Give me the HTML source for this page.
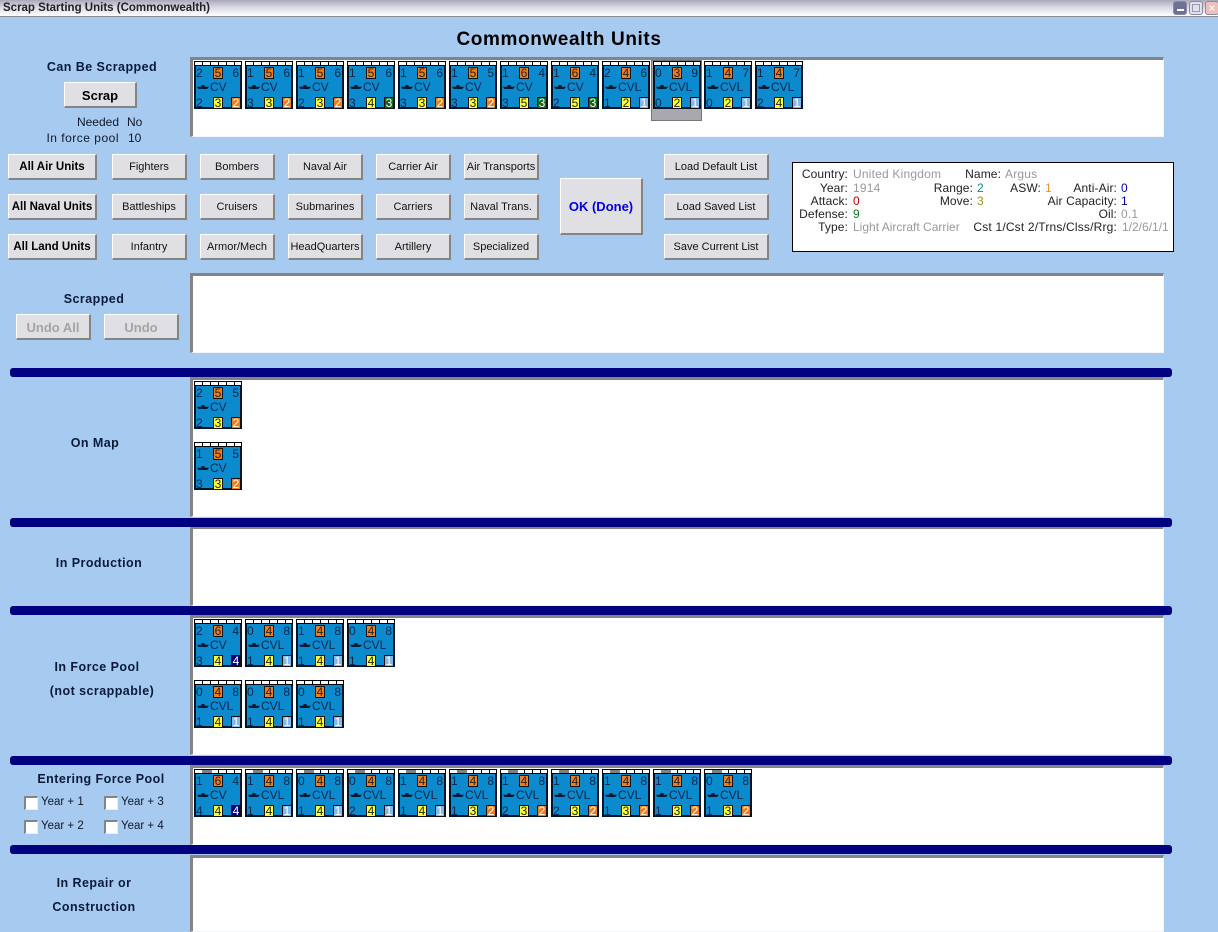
<!DOCTYPE html>
<html><head><meta charset="utf-8"><style>
html,body{margin:0;padding:0;width:1218px;height:932px;overflow:hidden;background:#a6caf0;font-family:"Liberation Sans",sans-serif;font-size:12px;color:#101828}
div,span,a{position:absolute;white-space:nowrap}
#w{left:0;top:0;width:1218px;height:932px;overflow:hidden}
#tb{left:0;top:0;width:1218px;height:16px;background:linear-gradient(#a9a9bb,#d8d8e2 45%,#fff);border-bottom:1px solid #8a8a98;font-weight:bold;font-size:11.5px;line-height:16px;color:#222}
.wb{top:1px;width:12px;height:12px;border:1px solid #8a8aa0;border-radius:3px;background:#dfe2ee;overflow:hidden}
.p{left:190px;width:970px;background:#fff;border-top:3px solid #848484;border-left:3px solid #848484;border-right:1px solid #f2f4fa;border-bottom:1px solid #f2f4fa}
.bar{left:10px;width:1162px;height:9px;background:#000080;border-radius:3px}
.b{height:23px;background:#e0dfe3;border-top:1px solid #fff;border-left:1px solid #fff;border-right:2px solid #848484;border-bottom:2px solid #848484;text-align:center;line-height:25px;font-size:11px;color:#111;box-sizing:content-box}
.h{font-weight:bold;color:#000;font-size:11.5px}
.g{color:#a4a4a4;font-weight:bold;font-size:13px}
.t{transform:translateX(-50%);font-weight:bold;font-size:12.5px;letter-spacing:.45px;color:#0a1a38;line-height:14px}
.r{text-align:right;width:100px;line-height:14px}
.cb{width:11px;height:11px;background:#fff;border-top:2px solid #848484;border-left:2px solid #848484;border-right:1px solid #e8eef8;border-bottom:1px solid #e8eef8}
.cl{line-height:14px;font-size:11.5px}
#info{left:792px;top:162px;width:380px;height:88px;background:#fff;border:1px solid #000}
#info span{line-height:13px;font-size:12px;color:#222;letter-spacing:.1px}
#info .v{color:#999;letter-spacing:.2px}
.u{width:48px;height:48px;background:#0b8ace;box-shadow:inset 0 -2px 0 #021428,inset 2px 0 0 #021428,inset -2px 0 0 #021428}
.s{left:0;top:0;width:48px;height:5px;box-sizing:border-box;border:1px solid #000;border-bottom:1px solid #000;background:repeating-linear-gradient(90deg,#fff 0 7px,#000 7px 8px)}
.s span{left:7px;top:0;width:10px;height:3px;background:#808080}
.a,.c,.d{line-height:12px;font-size:12px;color:#06284e}
.a{left:2px;top:6px}.c{right:3px;top:6px}.d{left:2px;top:36px}
.k{left:19px;top:6px;width:8px;height:10px;border:1px solid #111;text-align:center;line-height:11px;font-size:12px;color:#222;background:#ef7d18}
.y{top:36px;height:10px;background:#ffff33}
.q{left:37px;top:36px;height:10px;color:#fff}
.o{background:#ef7d18}.e{background:#0a6a18}.l{background:#80b8f0}.n{background:#000080}
.m{left:3px;top:24px;width:12px;height:4px;background:#031a30;clip-path:polygon(0 45%,35% 45%,38% 0,62% 0,65% 45%,100% 45%,85% 100%,12% 100%)}
.w{left:16px;top:20px;line-height:13px;font-size:12px;color:#06284e}
</style></head><body><div id="w">
<div id="tb"><span style="left:3px;top:0">Scrap Starting Units (Commonwealth)</span></div>
<div class="wb" style="left:1173px;background:#6d7198"><span style="left:3px;top:7px;width:7px;height:2px;background:#fff"></span></div>
<div class="wb" style="left:1189px"><span style="left:2px;top:2px;width:6px;height:6px;border:1px solid #99a"></span></div>
<div class="wb" style="left:1205px;background:#eec0bc;color:#fff;font-size:12px;line-height:12px;text-align:center">×</div>

<div style="left:0;width:1118px;top:29px;text-align:center;font-weight:bold;font-size:19px;line-height:22px;color:#000;letter-spacing:.6px">Commonwealth Units</div>

<div class="t" style="left:102px;top:60px">Can Be Scrapped</div>
<div class="b h" style="left:64px;top:82px;width:70px;font-size:13px">Scrap</div>
<div class="r" style="left:19px;top:115px">Needed</div><div style="left:127px;top:115px;line-height:14px">No</div>
<div class="r" style="left:19px;top:131px;letter-spacing:.5px">In force pool</div><div style="left:128px;top:131px;line-height:14px">10</div>

<div class="p" style="top:57px;height:76px"></div>
<div class="p" style="top:273px;height:76px"></div>
<div class="p" style="top:377px;height:136px"></div>
<div class="p" style="top:526px;height:76px"></div>
<div class="p" style="top:615px;height:136px"></div>
<div class="p" style="top:765px;height:76px"></div>
<div class="p" style="top:855px;height:73px"></div>

<div style="left:651px;top:60px;width:51px;height:61px;background:#a8a8b0;border:1px solid #777;box-sizing:border-box"></div>

<div class="b h" style="left:8px;top:154px;width:86px">All Air Units</div>
<div class="b h" style="left:8px;top:194px;width:86px">All Naval Units</div>
<div class="b h" style="left:8px;top:234px;width:86px">All Land Units</div>
<div class="b" style="left:112px;top:154px;width:72px">Fighters</div>
<div class="b" style="left:200px;top:154px;width:72px">Bombers</div>
<div class="b" style="left:288px;top:154px;width:72px">Naval Air</div>
<div class="b" style="left:376px;top:154px;width:72px">Carrier Air</div>
<div class="b" style="left:464px;top:154px;width:72px">Air Transports</div>
<div class="b" style="left:112px;top:194px;width:72px">Battleships</div>
<div class="b" style="left:200px;top:194px;width:72px">Cruisers</div>
<div class="b" style="left:288px;top:194px;width:72px">Submarines</div>
<div class="b" style="left:376px;top:194px;width:72px">Carriers</div>
<div class="b" style="left:464px;top:194px;width:72px">Naval Trans.</div>
<div class="b" style="left:112px;top:234px;width:72px">Infantry</div>
<div class="b" style="left:200px;top:234px;width:72px">Armor/Mech</div>
<div class="b" style="left:288px;top:234px;width:72px">HeadQuarters</div>
<div class="b" style="left:376px;top:234px;width:72px">Artillery</div>
<div class="b" style="left:464px;top:234px;width:72px">Specialized</div>
<div class="b" style="left:560px;top:178px;width:80px;height:54px;line-height:56px;font-weight:bold;font-size:13px;color:#0000e0">OK (Done)</div>
<div class="b" style="left:664px;top:154px;width:102px">Load Default List</div>
<div class="b" style="left:664px;top:194px;width:102px">Load Saved List</div>
<div class="b" style="left:664px;top:234px;width:102px">Save Current List</div>

<div id="info">
<span style="right:325px;top:5px">Country:</span><span class="v" style="left:60px;top:5px">United Kingdom</span>
<span style="right:172px;top:5px">Name:</span><span class="v" style="left:212px;top:5px">Argus</span>
<span style="right:325px;top:19px">Year:</span><span class="v" style="left:60px;top:19px">1914</span>
<span style="right:200px;top:19px">Range:</span><span style="left:184px;top:19px;color:#0a8a8a">2</span>
<span style="right:132px;top:19px">ASW:</span><span style="left:252px;top:19px;color:#e89030">1</span>
<span style="right:56px;top:19px">Anti-Air:</span><span style="left:328px;top:19px;color:#0000c0">0</span>
<span style="right:325px;top:32px">Attack:</span><span style="left:60px;top:32px;color:#c00000">0</span>
<span style="right:200px;top:32px">Move:</span><span style="left:184px;top:32px;color:#a09020">3</span>
<span style="right:56px;top:32px">Air Capacity:</span><span style="left:328px;top:32px;color:#000080">1</span>
<span style="right:325px;top:45px">Defense:</span><span style="left:60px;top:45px;color:#0a7a20">9</span>
<span style="right:56px;top:45px">Oil:</span><span class="v" style="left:328px;top:45px">0.1</span>
<span style="right:325px;top:58px">Type:</span><span class="v" style="left:60px;top:58px;letter-spacing:0">Light Aircraft Carrier</span>
<span style="right:56px;top:58px;letter-spacing:.18px">Cst 1/Cst 2/Trns/Clss/Rrg:</span><span class="v" style="left:329px;top:58px;letter-spacing:0">1/2/6/1/1</span>
</div>

<div class="t" style="left:94px;top:292px">Scrapped</div>
<div class="b g" style="left:16px;top:314px;width:72px">Undo All</div>
<div class="b g" style="left:104px;top:314px;width:72px">Undo</div>
<div class="t" style="left:95px;top:436px">On Map</div>
<div class="t" style="left:99px;top:556px">In Production</div>
<div class="t" style="left:97px;top:660px">In Force Pool</div>
<div class="t" style="left:102px;top:684px">(not scrappable)</div>
<div class="t" style="left:101px;top:772px">Entering Force Pool</div>
<div class="t" style="left:94px;top:876px">In Repair or</div>
<div class="t" style="left:94px;top:900px">Construction</div>

<div class="cb" style="left:24px;top:796px"></div><div class="cl" style="left:41px;top:795px">Year + 1</div>
<div class="cb" style="left:104px;top:796px"></div><div class="cl" style="left:121px;top:795px">Year + 3</div>
<div class="cb" style="left:24px;top:820px"></div><div class="cl" style="left:41px;top:819px">Year + 2</div>
<div class="cb" style="left:104px;top:820px"></div><div class="cl" style="left:121px;top:819px">Year + 4</div>

<div class="bar" style="top:368px"></div>
<div class="bar" style="top:518px"></div>
<div class="bar" style="top:606px"></div>
<div class="bar" style="top:756px"></div>
<div class="bar" style="top:845px"></div>

<!-- top row -->
<div class="u" style="left:194px;top:61px"><div class="s"></div><span class="a">2</span><span class="k">5</span><span class="c">6</span><span class="m"></span><span class="w">CV</span><span class="d">2</span><span class="k y">3</span><span class="k q o">2</span></div>
<div class="u" style="left:245px;top:61px"><div class="s"></div><span class="a">1</span><span class="k">5</span><span class="c">6</span><span class="m"></span><span class="w">CV</span><span class="d">3</span><span class="k y">3</span><span class="k q o">2</span></div>
<div class="u" style="left:296px;top:61px"><div class="s"></div><span class="a">1</span><span class="k">5</span><span class="c">6</span><span class="m"></span><span class="w">CV</span><span class="d">2</span><span class="k y">3</span><span class="k q o">2</span></div>
<div class="u" style="left:347px;top:61px"><div class="s"></div><span class="a">1</span><span class="k">5</span><span class="c">6</span><span class="m"></span><span class="w">CV</span><span class="d">3</span><span class="k y">4</span><span class="k q e">3</span></div>
<div class="u" style="left:398px;top:61px"><div class="s"></div><span class="a">1</span><span class="k">5</span><span class="c">6</span><span class="m"></span><span class="w">CV</span><span class="d">3</span><span class="k y">3</span><span class="k q o">2</span></div>
<div class="u" style="left:449px;top:61px"><div class="s"></div><span class="a">1</span><span class="k">5</span><span class="c">5</span><span class="m"></span><span class="w">CV</span><span class="d">3</span><span class="k y">3</span><span class="k q o">2</span></div>
<div class="u" style="left:500px;top:61px"><div class="s"></div><span class="a">1</span><span class="k">6</span><span class="c">4</span><span class="m"></span><span class="w">CV</span><span class="d">3</span><span class="k y">5</span><span class="k q e">3</span></div>
<div class="u" style="left:551px;top:61px"><div class="s"></div><span class="a">1</span><span class="k">6</span><span class="c">4</span><span class="m"></span><span class="w">CV</span><span class="d">2</span><span class="k y">5</span><span class="k q e">3</span></div>
<div class="u" style="left:602px;top:61px"><div class="s"></div><span class="a">2</span><span class="k">4</span><span class="c">6</span><span class="m"></span><span class="w">CVL</span><span class="d">1</span><span class="k y">2</span><span class="k q l">1</span></div>
<div class="u" style="left:653px;top:61px"><div class="s"></div><span class="a">0</span><span class="k">3</span><span class="c">9</span><span class="m"></span><span class="w">CVL</span><span class="d">0</span><span class="k y">2</span><span class="k q l">1</span></div>
<div class="u" style="left:704px;top:61px"><div class="s"></div><span class="a">1</span><span class="k">4</span><span class="c">7</span><span class="m"></span><span class="w">CVL</span><span class="d">0</span><span class="k y">2</span><span class="k q l">1</span></div>
<div class="u" style="left:755px;top:61px"><div class="s"></div><span class="a">1</span><span class="k">4</span><span class="c">7</span><span class="m"></span><span class="w">CVL</span><span class="d">2</span><span class="k y">4</span><span class="k q l">1</span></div>

<!-- on map -->
<div class="u" style="left:194px;top:381px"><div class="s"></div><span class="a">2</span><span class="k">5</span><span class="c">5</span><span class="m"></span><span class="w">CV</span><span class="d">2</span><span class="k y">3</span><span class="k q o">2</span></div>
<div class="u" style="left:194px;top:442px"><div class="s"></div><span class="a">1</span><span class="k">5</span><span class="c">5</span><span class="m"></span><span class="w">CV</span><span class="d">3</span><span class="k y">3</span><span class="k q o">2</span></div>

<!-- force pool -->
<div class="u" style="left:194px;top:619px"><div class="s"></div><span class="a">2</span><span class="k">6</span><span class="c">4</span><span class="m"></span><span class="w">CV</span><span class="d">3</span><span class="k y">4</span><span class="k q n">4</span></div>
<div class="u" style="left:245px;top:619px"><div class="s"></div><span class="a">0</span><span class="k">4</span><span class="c">8</span><span class="m"></span><span class="w">CVL</span><span class="d">1</span><span class="k y">4</span><span class="k q l">1</span></div>
<div class="u" style="left:296px;top:619px"><div class="s"></div><span class="a">1</span><span class="k">4</span><span class="c">8</span><span class="m"></span><span class="w">CVL</span><span class="d">1</span><span class="k y">4</span><span class="k q l">1</span></div>
<div class="u" style="left:347px;top:619px"><div class="s"></div><span class="a">0</span><span class="k">4</span><span class="c">8</span><span class="m"></span><span class="w">CVL</span><span class="d">1</span><span class="k y">4</span><span class="k q l">1</span></div>
<div class="u" style="left:194px;top:680px"><div class="s"></div><span class="a">0</span><span class="k">4</span><span class="c">8</span><span class="m"></span><span class="w">CVL</span><span class="d">1</span><span class="k y">4</span><span class="k q l">1</span></div>
<div class="u" style="left:245px;top:680px"><div class="s"></div><span class="a">0</span><span class="k">4</span><span class="c">8</span><span class="m"></span><span class="w">CVL</span><span class="d">1</span><span class="k y">4</span><span class="k q l">1</span></div>
<div class="u" style="left:296px;top:680px"><div class="s"></div><span class="a">0</span><span class="k">4</span><span class="c">8</span><span class="m"></span><span class="w">CVL</span><span class="d">1</span><span class="k y">4</span><span class="k q l">1</span></div>

<!-- entering -->
<div class="u" style="left:194px;top:769px"><div class="s"><span></span></div><span class="a">1</span><span class="k">6</span><span class="c">4</span><span class="m"></span><span class="w">CV</span><span class="d">4</span><span class="k y">4</span><span class="k q n">4</span></div>
<div class="u" style="left:245px;top:769px"><div class="s"><span></span></div><span class="a">1</span><span class="k">4</span><span class="c">8</span><span class="m"></span><span class="w">CVL</span><span class="d">1</span><span class="k y">4</span><span class="k q l">1</span></div>
<div class="u" style="left:296px;top:769px"><div class="s"><span></span></div><span class="a">0</span><span class="k">4</span><span class="c">8</span><span class="m"></span><span class="w">CVL</span><span class="d">1</span><span class="k y">4</span><span class="k q l">1</span></div>
<div class="u" style="left:347px;top:769px"><div class="s"><span></span></div><span class="a">0</span><span class="k">4</span><span class="c">8</span><span class="m"></span><span class="w">CVL</span><span class="d">2</span><span class="k y">4</span><span class="k q l">1</span></div>
<div class="u" style="left:398px;top:769px"><div class="s"><span></span></div><span class="a">1</span><span class="k">4</span><span class="c">8</span><span class="m"></span><span class="w">CVL</span><span class="d">1</span><span class="k y">4</span><span class="k q l">1</span></div>
<div class="u" style="left:449px;top:769px"><div class="s"><span></span></div><span class="a">1</span><span class="k">4</span><span class="c">8</span><span class="m"></span><span class="w">CVL</span><span class="d">1</span><span class="k y">3</span><span class="k q o">2</span></div>
<div class="u" style="left:500px;top:769px"><div class="s"><span></span></div><span class="a">1</span><span class="k">4</span><span class="c">8</span><span class="m"></span><span class="w">CVL</span><span class="d">2</span><span class="k y">3</span><span class="k q o">2</span></div>
<div class="u" style="left:551px;top:769px"><div class="s"><span></span></div><span class="a">1</span><span class="k">4</span><span class="c">8</span><span class="m"></span><span class="w">CVL</span><span class="d">2</span><span class="k y">3</span><span class="k q o">2</span></div>
<div class="u" style="left:602px;top:769px"><div class="s"><span></span></div><span class="a">1</span><span class="k">4</span><span class="c">8</span><span class="m"></span><span class="w">CVL</span><span class="d">1</span><span class="k y">3</span><span class="k q o">2</span></div>
<div class="u" style="left:653px;top:769px"><div class="s"><span></span></div><span class="a">1</span><span class="k">4</span><span class="c">8</span><span class="m"></span><span class="w">CVL</span><span class="d">1</span><span class="k y">3</span><span class="k q o">2</span></div>
<div class="u" style="left:704px;top:769px"><div class="s"><span></span></div><span class="a">0</span><span class="k">4</span><span class="c">8</span><span class="m"></span><span class="w">CVL</span><span class="d">1</span><span class="k y">3</span><span class="k q o">2</span></div>
</div></body></html>
